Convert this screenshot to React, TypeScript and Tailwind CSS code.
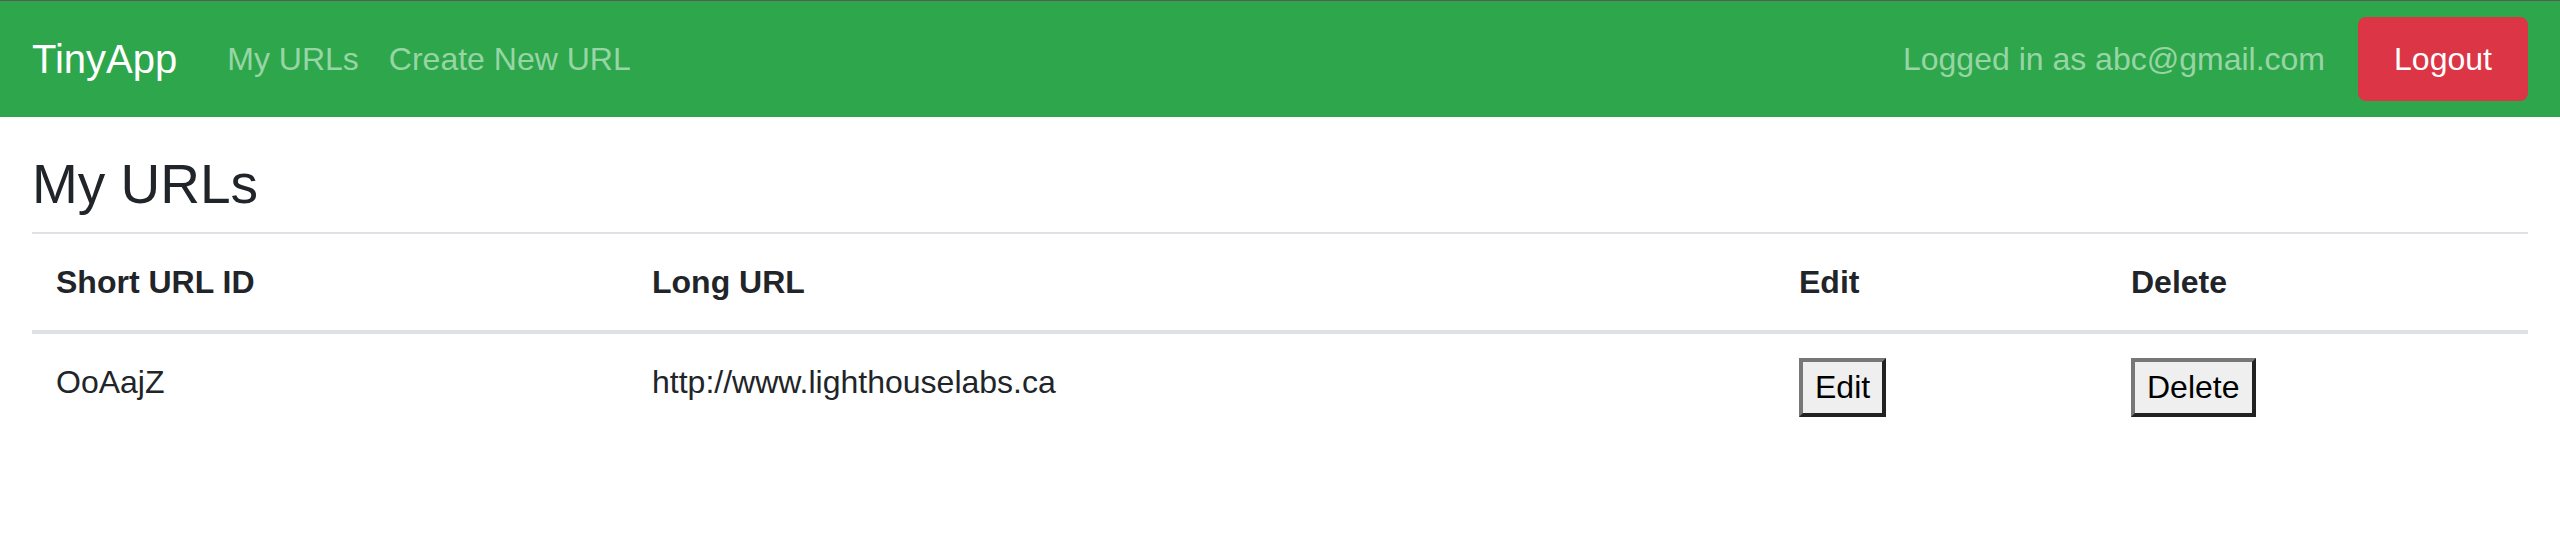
const urls = [{ id: "OoAajZ", longURL: "http://www.lighthouselabs.ca" }];

const NavBar = () => {
  return (
    <nav className="flex h-[117px] items-center justify-between border-t border-[#5a5a5a] bg-[#2ea64c] px-[32px]">
      <div className="flex items-center">
        <a href="#" className="mr-[50px] text-[40px] leading-[60px] text-white">
          TinyApp
        </a>
        <a href="#" className="mr-[30px] text-[32px] leading-[48px] text-[#97d5a5]">
          My URLs
        </a>
        <a href="#" className="text-[32px] leading-[48px] text-[#97d5a5]">
          Create New URL
        </a>
      </div>
      <div className="flex items-center">
        <span className="mr-[33px] text-[32px] leading-[48px] text-[#97d5a5]">Logged in as abc@gmail.com</span>
        <button className="h-[84px] w-[170px] rounded-[8px] bg-[#dc3545] text-[32px] text-white">Logout</button>
      </div>
    </nav>
  );
};

const ActionButton = ({ label }: { label: string }) => (
  <button className="h-[59px] border-[4px] border-t-[#777] border-l-[#777] border-r-[#222] border-b-[#222] bg-[#efefef] px-[12px] text-[32px] leading-[51px] text-black">
    {label}
  </button>
);

export default function App() {
  return (
    <div className="min-h-screen bg-white font-['Liberation_Sans',Arial,sans-serif] text-[#212529]">
      <NavBar />
      <main className="px-[32px]">
        <h3 className="mt-[35px] mb-[16px] text-[55px] leading-[64px]">My URLs</h3>
        <table className="w-full border-collapse text-left">
          <thead>
            <tr className="border-t-2 border-b-4 border-[#dee2e6]">
              <th className="w-[596px] p-[24px] text-[32px] leading-[48px] font-bold">Short URL ID</th>
              <th className="w-[1147px] p-[24px] text-[32px] leading-[48px] font-bold">Long URL</th>
              <th className="w-[332px] p-[24px] text-[32px] leading-[48px] font-bold">Edit</th>
              <th className="p-[24px] text-[32px] leading-[48px] font-bold">Delete</th>
            </tr>
          </thead>
          <tbody>
            {urls.map((url) => (
              <tr key={url.id}>
                <td className="p-[24px] align-top text-[32px] leading-[48px]">{url.id}</td>
                <td className="p-[24px] align-top text-[32px] leading-[48px]">{url.longURL}</td>
                <td className="p-[24px] align-top">
                  <ActionButton label="Edit" />
                </td>
                <td className="p-[24px] align-top">
                  <ActionButton label="Delete" />
                </td>
              </tr>
            ))}
          </tbody>
        </table>
      </main>
    </div>
  );
}
